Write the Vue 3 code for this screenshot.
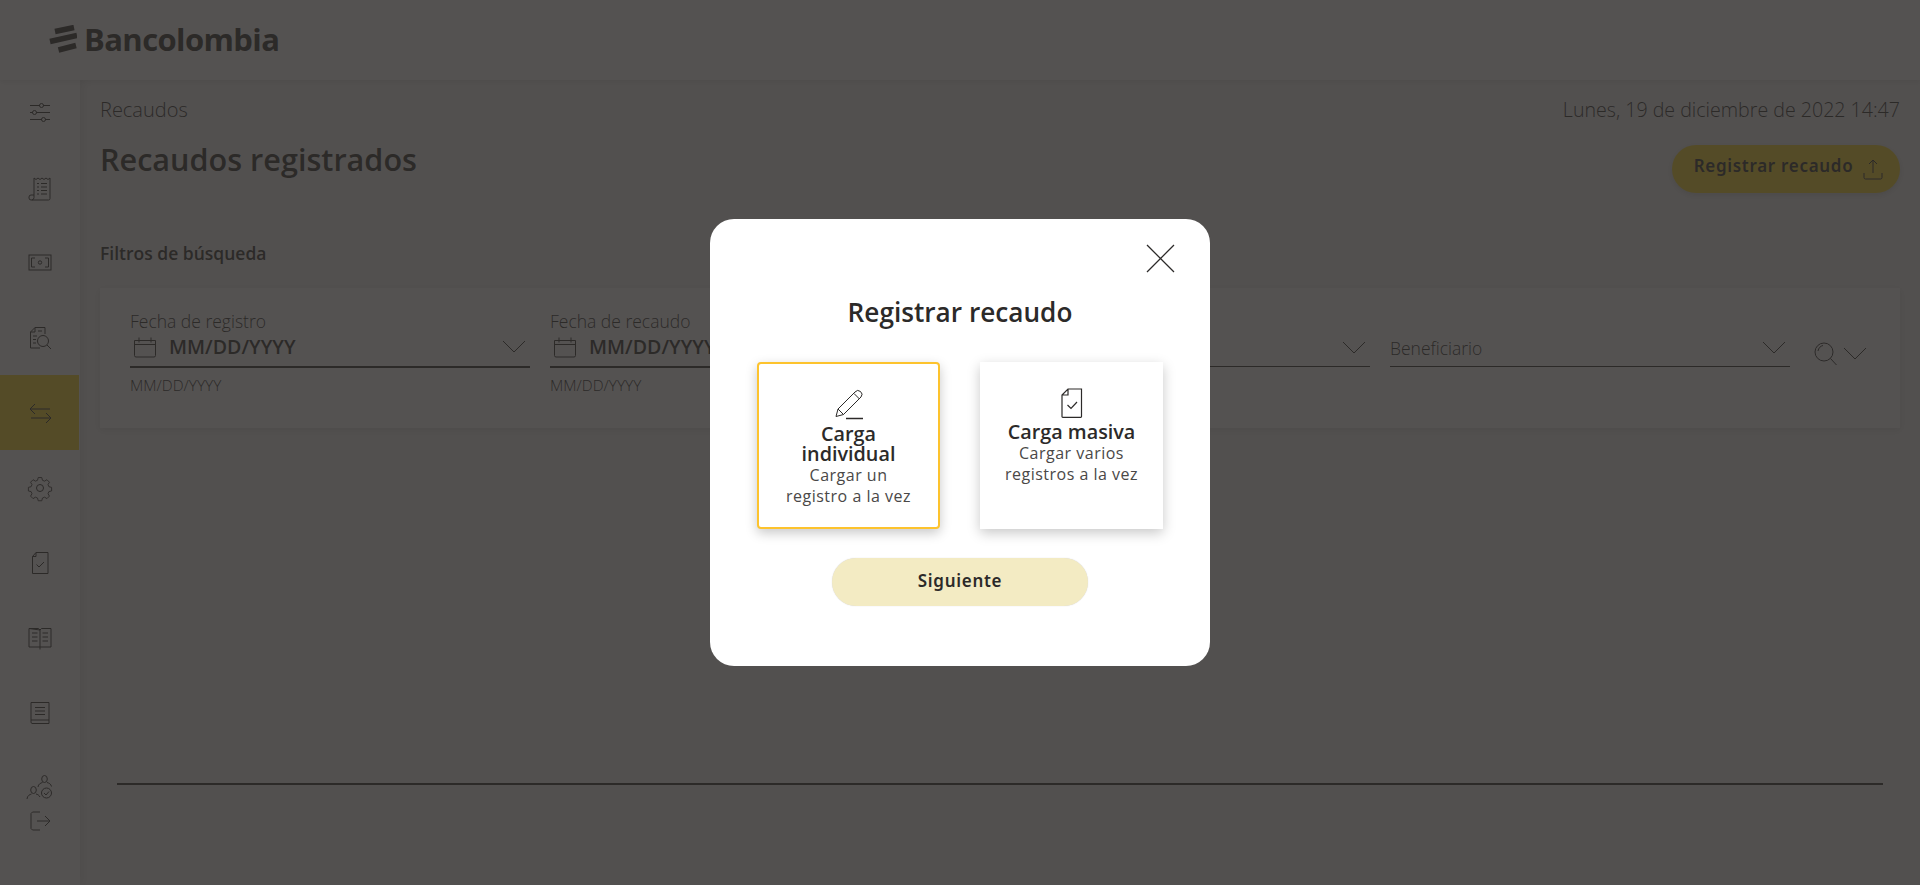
<template>
  <div class="page">
    <header class="top">
      <div class="logo">
        <svg class="logo-mark" viewBox="0 0 28 28" width="28" height="28" fill="none" stroke="#2c2a29" stroke-width="5.500">
          <path d="M6 6.500 25 2.500" />
          <path d="M1 16.500 28 10.500" />
          <path d="M9.500 25 27 20.500" />
        </svg>
        <span>Bancolombia</span>
      </div>
    </header>

    <div class="body">
      <aside class="side">
        <div v-for="it in menu" :key="it.name" class="side-item" :class="{ active: it.name === 'arrows' }">
          <svg width="28" height="28" viewBox="0 0 28 28" fill="none" stroke="#2c2a29" stroke-width="1">
            <g v-if="it.name === 'sliders'">
              <path d="M4 6.500h10M17 6.500h7M4 13.500h3M10 13.500h14M4 20.500h12M19 20.500h5" />
              <circle cx="15.500" cy="6.500" r="2" /><circle cx="8.500" cy="13.500" r="2" /><circle cx="17.500" cy="20.500" r="2" />
            </g>
            <g v-else-if="it.name === 'receipt'">
              <path d="M8 21V4l2 1.500L12 4l2 1.500L16 4l2 1.500L20 4l2 1.500L24 4v20.500a1.500 1.500 0 0 1-1.500 1.500H5a2 2 0 0 1-2-2v-1a2 2 0 0 1 2-2h3v2.500a2.500 2.500 0 0 1-2 2.500" />
              <path d="M11 9.500h2M15 9.500h6M11 13h2M15 13h6M11 16.500h2M15 16.500h6M11 20h2M15 20h6" />
            </g>
            <g v-else-if="it.name === 'money'">
              <rect x="3" y="6" width="22" height="15" />
              <path d="M9 9H5.500v9H9M19 9h3.500v9H19" />
              <circle cx="14" cy="13.500" r="1.700" />
            </g>
            <g v-else-if="it.name === 'search-doc'">
              <path d="M14 24H4.500V8L9 3.500h10V10M9 3.500V8H4.500" />
              <path d="M7 12h4M7 15.500h3M7 19h3M12 7h4" />
              <circle cx="17" cy="17" r="5.500" /><path d="M21 21l4 4" />
            </g>
            <g v-else-if="it.name === 'arrows'">
              <path d="M4 10h20M9 5 4 10l5 5M5 19h20M20 14l5 5-5 5" />
            </g>
            <g v-else-if="it.name === 'gear'">
              <path d="M12 3.500h4l.7 3 2.400 1 2.600-1.600 2.800 2.800-1.600 2.600 1 2.400 3 .7v4l-3 .7-1 2.400 1.600 2.600-2.800 2.800-2.600-1.600-2.400 1-.7 3h-4l-.7-3-2.400-1-2.600 1.600-2.800-2.800 1.600-2.600-1-2.400-3-.7v-4l3-.7 1-2.400-1.600-2.600 2.800-2.800 2.600 1.600 2.400-1z" transform="translate(1.400 .4) scale(.9)" />
              <circle cx="14" cy="14" r="3.500" />
            </g>
            <g v-else-if="it.name === 'file-check'">
              <path d="M10 3.500h12v21H6.500V7.500ZM10 3.500v4H6.500" />
              <path d="m10.500 15.500 2.500 2.500 5-5" />
            </g>
            <g v-else-if="it.name === 'book'">
              <path d="M14 6 3 4.500h9.500L14 6l1.500-1.500H25V23H3V4.500M14 6v19.500" />
              <path d="M6 9h5.500M6 13h5.500M6 17h5.500M16.500 9H22M16.500 13H22M16.500 17H22" />
            </g>
            <g v-else-if="it.name === 'book2'">
              <path d="M5 3.500h18v21H6a1.500 1.500 0 0 1-1-1.500ZM5 21h18" />
              <path d="M9 8.500h10M9 12h10M9 15.500h10" />
            </g>
          </svg>
        </div>
        <div class="side-extra">
          <svg class="users" width="28" height="26" viewBox="0 0 28 26" fill="none" stroke="#2c2a29" stroke-width="1">
            <ellipse cx="18.500" cy="5" rx="2.800" ry="3.500" />
            <path d="M12 13c.3-3 2.700-4 4.500-4.500M21 8.500c2 .5 4 1.500 4.500 4" />
            <ellipse cx="7.500" cy="16" rx="2.800" ry="3.500" />
            <path d="M1 25c.3-3.500 2.800-4.500 4.500-5M10 20c1.500.4 3 1 4 3" />
            <circle cx="20.500" cy="19" r="5" /><path d="m18 19 2 2 3-3.500" />
          </svg>
          <svg width="22" height="22" viewBox="0 0 22 22" fill="none" stroke="#2c2a29" stroke-width="1">
            <path d="M11 2H3.500L2 3.500v15L3.500 20H11M8 11h13M16 6l5 5-5 5" />
          </svg>
        </div>
      </aside>

      <main class="main">
        <div class="crumb-row">
          <span class="crumb">Recaudos</span>
          <span class="date">Lunes, 19 de diciembre de 2022 14:47</span>
        </div>
        <div class="title-row">
          <h1>Recaudos registrados</h1>
          <button class="btn-reg" type="button">
            <span>Registrar recaudo</span>
            <svg width="20" height="21" viewBox="0 0 20 21" fill="none" stroke="#2c2a29" stroke-width="1">
              <path d="M10 14V1M6 5l4-4 4 4M1 14v4.500A1.500 1.500 0 0 0 2.500 20h15a1.500 1.500 0 0 0 1.500-1.500V14" />
            </svg>
          </button>
        </div>

        <h2>Filtros de búsqueda</h2>

        <section class="filters">
          <div class="field">
            <label>Fecha de registro</label>
            <div class="input thick">
              <svg class="cal" width="24" height="22" viewBox="0 0 24 22" fill="none" stroke="#2c2a29" stroke-width="1">
                <path d="M1.500 4.500h21v15a1.500 1.500 0 0 1-1.500 1.500H3a1.500 1.500 0 0 1-1.500-1.500ZM1.500 8.500h21M6 1.500v5M18 1.500v5" />
              </svg>
              <span class="val">MM/DD/YYYY</span>
              <svg class="chev" width="24" height="13" viewBox="0 0 24 13" fill="none" stroke="#2c2a29" stroke-width="1"><path d="m1 1 11 11L23 1" /></svg>
            </div>
            <small>MM/DD/YYYY</small>
          </div>
          <div class="field">
            <label>Fecha de recaudo</label>
            <div class="input thick">
              <svg class="cal" width="24" height="22" viewBox="0 0 24 22" fill="none" stroke="#2c2a29" stroke-width="1">
                <path d="M1.500 4.500h21v15a1.500 1.500 0 0 1-1.500 1.500H3a1.500 1.500 0 0 1-1.500-1.500ZM1.500 8.500h21M6 1.500v5M18 1.500v5" />
              </svg>
              <span class="val">MM/DD/YYYY</span>
              <svg class="chev" width="24" height="13" viewBox="0 0 24 13" fill="none" stroke="#2c2a29" stroke-width="1"><path d="m1 1 11 11L23 1" /></svg>
            </div>
            <small>MM/DD/YYYY</small>
          </div>
          <div class="field select">
            <div class="input">
              <svg class="chev" width="24" height="13" viewBox="0 0 24 13" fill="none" stroke="#2c2a29" stroke-width="1"><path d="m1 1 11 11L23 1" /></svg>
            </div>
          </div>
          <div class="field select">
            <div class="input">
              <span class="ph">Beneficiario</span>
              <svg class="chev" width="24" height="13" viewBox="0 0 24 13" fill="none" stroke="#2c2a29" stroke-width="1"><path d="m1 1 11 11L23 1" /></svg>
            </div>
          </div>
          <div class="search">
            <svg width="26" height="24" viewBox="0 0 26 24" fill="none" stroke="#2c2a29" stroke-width="1">
              <circle cx="11" cy="10" r="9" /><path d="m17.500 16.500 6 6.500M5 9c.5-3 2.500-5 5-5.500" />
            </svg>
            <svg width="24" height="13" viewBox="0 0 24 13" fill="none" stroke="#2c2a29" stroke-width="1"><path d="m1 1 11 11L23 1" /></svg>
          </div>
        </section>

        <div class="rule"></div>
      </main>
    </div>

    <div class="overlay">
      <div class="modal">
        <button class="close" type="button" aria-label="Cerrar">
          <svg width="29" height="29" viewBox="0 0 29 29" fill="none" stroke="#2c2a29" stroke-width="1.300"><path d="M1 1l27 27M28 1 1 28" /></svg>
        </button>
        <h3>Registrar recaudo</h3>
        <div class="options">
          <div class="option selected">
            <svg class="opt-icon" width="28" height="32" viewBox="0 0 28 32" fill="none" stroke="#2c2a29" stroke-width="1">
              <path d="M1 28.500 3 21 20 4a3 3 0 0 1 6 5L8.500 26.500ZM3 21l5.500 5.500M19 5.500l5.500 5.500" />
              <path d="M11 30.500h17" stroke-width="1.500" />
            </svg>
            <strong>Carga individual</strong>
            <p>Cargar un registro a la vez</p>
          </div>
          <div class="option">
            <svg class="opt-icon" width="22" height="30" viewBox="0 0 22 30" fill="none" stroke="#2c2a29" stroke-width="1.200">
              <path d="M7 1h13.500v27.500a.8.8 0 0 1-.8.8H1.800a.8.8 0 0 1-.8-.8V7ZM7 1v6H1" />
              <path d="m6.500 17 3.500 3.500 6-6.500" />
            </svg>
            <strong>Carga masiva</strong>
            <p>Cargar varios registros a la vez</p>
          </div>
        </div>
        <button class="next" type="button">Siguiente</button>
      </div>
    </div>
  </div>
</template>

<script setup>
const menu = [
  { name: "sliders" },
  { name: "receipt" },
  { name: "money" },
  { name: "search-doc" },
  { name: "arrows" },
  { name: "gear" },
  { name: "file-check" },
  { name: "book" },
  { name: "book2" },
]
</script>

<style>
html,
body {
  margin: 0;
  height: 100%;
  overflow: hidden;
}
</style>

<style scoped>
.page {
  height: 885px;
  background: #f4f4f4;
  color: #2c2a29;
  font-family: "Open Sans", sans-serif;
  overflow: hidden;
}
.top {
  position: relative;
  z-index: 3;
  height: 80px;
  background: #fff;
  box-shadow: 0 2px 6px rgba(0, 0, 0, 0.1);
  display: flex;
  align-items: center;
  padding-left: 49px;
}
.logo {
  display: flex;
  align-items: center;
  gap: 7px;
  margin-top: -2px;
  font-size: 31px;
  font-weight: 700;
  letter-spacing: -0.6px;
}
.body {
  display: flex;
  height: 805px;
}
.side {
  position: relative;
  z-index: 2;
  width: 80px;
  flex: none;
  background: #fff;
  box-shadow: 2px 0 10px rgba(0, 0, 0, 0.1);
  margin-top: -5px;
}
.side-item {
  width: 79px;
  height: 75px;
  display: flex;
  align-items: center;
  justify-content: center;
}
.side-item.active {
  background: #fdda24;
}
.side-extra {
  display: flex;
  flex-direction: column;
  align-items: center;
  gap: 10px;
  padding-top: 24px;
}
.main {
  flex: 1;
  padding: 0 20px;
  min-width: 0;
}
.crumb-row {
  display: flex;
  justify-content: space-between;
  align-items: center;
  height: 24px;
  margin-top: 17px;
  font-size: 20px;
  font-weight: 300;
}
.date {
  font-size: 19.6px;
}
.title-row {
  display: flex;
  justify-content: space-between;
  align-items: flex-start;
  height: 68px;
  margin-top: 4px;
}
h1 {
  margin: 14px 0 0;
  font-size: 30.6px;
  line-height: 40px;
  font-weight: 600;
}
.btn-reg {
  width: 228px;
  height: 48px;
  margin-top: 20px;
  border: none;
  border-radius: 24px;
  background: #fdda24;
  box-shadow: 0 2px 6px rgba(0, 0, 0, 0.15);
  display: flex;
  align-items: flex-start;
  justify-content: center;
  gap: 10px;
  padding: 9px 0 0 5px;
  box-sizing: border-box;
  color: #2c2a29;
  font-family: "Noto Sans", sans-serif;
  font-size: 17px;
  font-weight: 600;
  letter-spacing: 0.7px;
}
.btn-reg svg {
  margin-top: 5px;
}
h2 {
  margin: 49px 0 0;
  font-size: 17.5px;
  line-height: 22px;
  font-weight: 600;
}
.filters {
  display: flex;
  gap: 20px;
  height: 140px;
  margin-top: 24px;
  padding: 23px 0 0 30px;
  box-sizing: border-box;
  background: #fff;
  box-shadow: 0 2px 8px rgba(0, 0, 0, 0.12);
}
.field {
  width: 400px;
  flex: none;
  font-weight: 300;
}
.field label {
  display: block;
  font-size: 17.5px;
  line-height: 20px;
}
.input {
  display: flex;
  align-items: center;
  height: 36px;
  padding-bottom: 2px;
  border-bottom: 1px solid #2c2a29;
  box-sizing: border-box;
}
.input.thick {
  border-bottom-width: 2px;
  height: 37px;
  padding-bottom: 4px;
}
.select {
  padding-top: 20px;
}
.cal {
  margin: 0 12px 0 3px;
}
.val {
  font-size: 19.6px;
  font-weight: 600;
}
.ph {
  font-size: 17.5px;
}
.chev {
  margin-left: auto;
  margin-right: 4px;
}
.field small {
  display: block;
  margin-top: 8px;
  font-size: 15.4px;
  line-height: 20px;
}
.search {
  display: flex;
  align-items: flex-start;
  gap: 4px;
  margin-left: 3px;
  padding-top: 31px;
}
.search svg:last-child {
  margin-top: 5px;
}
.rule {
  height: 2px;
  background: #2c2a29;
  margin: 355px 17px 0;
}
.overlay {
  position: fixed;
  inset: 0;
  z-index: 10;
  background: rgba(44, 42, 41, 0.81);
}
.modal {
  position: absolute;
  left: 710px;
  top: 219px;
  width: 500px;
  height: 447px;
  box-sizing: border-box;
  padding-top: 76px;
  background: #fff;
  border-radius: 24px;
  text-align: center;
}
.close {
  position: absolute;
  top: 25px;
  right: 35px;
  padding: 0;
  border: none;
  background: none;
  line-height: 0;
}
h3 {
  margin: 0;
  font-size: 26.2px;
  line-height: 35px;
  font-weight: 600;
}
.options {
  display: flex;
  justify-content: center;
  gap: 40px;
  margin-top: 32px;
}
.option {
  width: 183px;
  height: 167px;
  box-sizing: border-box;
  padding: 26px 20px 0;
  background: #fff;
  box-shadow: 0 4px 12px rgba(0, 0, 0, 0.22);
  display: flex;
  flex-direction: column;
  align-items: center;
}
.option.selected {
  padding: 24px 22px 0;
  border: 2px solid #fdc32d;
  border-radius: 4px;
}
.opt-icon {
  flex: none;
  margin-bottom: 4px;
}
.option strong {
  font-size: 19.8px;
  line-height: 20px;
  font-weight: 600;
}
.option p {
  margin: 1px 0 0;
  font-size: 16px;
  line-height: 21px;
  font-weight: 400;
  letter-spacing: 0.5px;
  color: #4a4847;
}
.next {
  display: block;
  width: 256px;
  height: 48px;
  margin: 29px auto 0;
  padding: 0 0 4px;
  border: none;
  border-radius: 24px;
  background: #f3ebc3;
  box-shadow: 0 0 1px rgba(60, 60, 90, 0.25);
  color: #2c2a29;
  font-family: "Noto Sans", sans-serif;
  font-size: 17px;
  font-weight: 600;
  letter-spacing: 0.7px;
}
</style>
